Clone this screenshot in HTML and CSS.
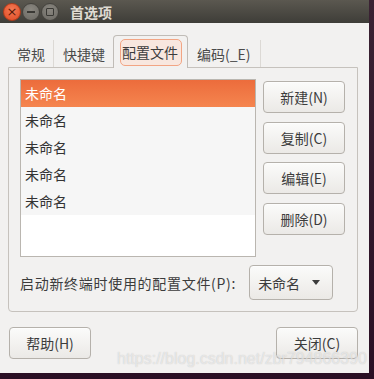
FILE: index.html
```html
<!DOCTYPE html>
<html lang="zh-CN">
<head>
    <meta charset="UTF-8">
    <title>首选项</title>
    <link rel="stylesheet" href="styles.css">
</head>
<body>
    <div class="window">
        <!-- Title bar -->
        <div class="titlebar">
            <span class="wbtn wbtn-close">&times;</span>
            <span class="wbtn wbtn-min"><i class="bar"></i></span>
            <span class="wbtn wbtn-max"><i class="box"></i></span>
            <span class="title">首选项</span>
        </div>

        <div class="content">
            <div class="tabs">
                <div class="tab">常规</div>
                <div class="tab">快捷键</div>
                <div class="tab active"><span class="focus">配置文件</span></div>
                <div class="tab">编码(_E)</div>
            </div>

            <div class="page">
                <div class="profiles">
                    <div class="list">
                        <div class="row selected">未命名</div>
                        <div class="row">未命名</div>
                        <div class="row">未命名</div>
                        <div class="row">未命名</div>
                        <div class="row">未命名</div>
                    </div>
                    <div class="actions">
                        <button class="btn">新建(N)</button>
                        <button class="btn">复制(C)</button>
                        <button class="btn">编辑(E)</button>
                        <button class="btn">删除(D)</button>
                    </div>
                </div>
                <div class="default-row">
                    <span class="label">启动新终端时使用的配置文件(P):</span>
                    <button class="btn combo">未命名 <i class="arrow"></i></button>
                </div>
            </div>

            <div class="footer">
                <button class="btn">帮助(H)</button>
                <button class="btn">关闭(C)</button>
            </div>
        </div>

        <div class="watermark">https://blog.csdn.net/zbr794866390</div>
    </div>
</body>
</html>
```

FILE: styles.css
```css
body {
    margin: 0;
    width: 374px;
    height: 379px;
    background: linear-gradient(#3a2233, #2a0f24);
    font-family: "Noto Sans CJK SC", "Noto Sans", sans-serif;
    font-size: 14px;
    color: #3c3c3c;
    overflow: hidden;
}
.window {
    position: relative;
    width: 369px;
    height: 373px;
    background: #f2f1f0;
    display: flex;
    flex-direction: column;
}

/* Title bar */
.titlebar {
    height: 23px;
    background: linear-gradient(#5b5850, #3e3d38);
    display: flex;
    align-items: center;
    padding-left: 3px;
    gap: 1px;
}
.wbtn {
    width: 18px;
    height: 18px;
    border-radius: 50%;
    box-sizing: border-box;
    display: flex;
    align-items: center;
    justify-content: center;
}
.wbtn-close {
    background: radial-gradient(circle at 50% 35%, #f47a55, #df4a23);
    border: 1px solid #b03c1c;
    color: #5a1a08;
    font-size: 13px;
    line-height: 1;
    font-family: "DejaVu Sans", sans-serif;
}
.wbtn-min, .wbtn-max {
    background: radial-gradient(circle at 50% 35%, #8a8780, #6a6862);
    border: 1px solid #45433e;
}
.bar {
    width: 8px;
    height: 2px;
    background: #3a3935;
}
.box {
    width: 6px;
    height: 6px;
    border: 1.5px solid #3a3935;
    border-radius: 1px;
}
.title {
    margin-left: 10px;
    color: #dfdbd2;
    font-weight: bold;
    font-size: 14px;
}

/* Dialog body */
.content {
    flex: 1;
    padding: 12px 11px 0 8px;
    display: flex;
    flex-direction: column;
}
.tabs {
    display: flex;
    align-items: flex-end;
    height: 33px;
    margin-bottom: -1px;
}
.tab {
    height: 28px;
    padding: 0 9px;
    display: flex;
    align-items: center;
    line-height: 20px;
    color: #4a4a4a;
    border-right: 1px solid #dcd9d5;
}
.tab:first-child {
    padding-right: 8px;
}
.tab:nth-child(2) {
    border-right: none;
    padding-right: 8px;
}
.tab.active {
    position: relative;
    height: 32px;
    padding: 0 5px 0 6px;
    border: 1px solid #c0bcb7;
    border-bottom: none;
    border-radius: 4px 4px 0 0;
    background: #f2f1f0;
    color: #3c3c3c;
}
.focus {
    padding: 2px 3px 3px 1px;
    border: 1px solid #f2a584;
    border-radius: 5px;
    background: #f8e7df;
}
.page {
    border: 1px solid #c6c2bd;
    border-radius: 0 0 4px 4px;
    padding: 11px 12px 11px 11px;
}
.profiles {
    display: flex;
    gap: 7px;
}
.list {
    width: 236px;
    height: 178px;
    box-sizing: border-box;
    border: 1px solid #bab6b0;
    background: #fff;
}
.row {
    height: 27px;
    line-height: 27px;
    padding-left: 4px;
    background: #f6f6f6;
    color: #333;
}
.row.selected {
    background: linear-gradient(#ec6c3c, #f5854f);
    color: #fff;
}
.actions {
    display: flex;
    flex-direction: column;
    gap: 8.5px;
    padding-top: 2px;
}
.btn {
    width: 82px;
    height: 32px;
    box-sizing: border-box;
    border: 1px solid #b5b1ab;
    border-radius: 4px;
    background: linear-gradient(#fbfbfa, #ebe9e6);
    box-shadow: 0 1px 0 rgba(255,255,255,0.6) inset;
    font-family: inherit;
    font-size: 14px;
    color: #3c3c3c;
    padding: 0;
}
.default-row {
    display: flex;
    align-items: center;
    gap: 13px;
    margin-top: 8px;
}
.label {
    color: #3c3c3c;
    letter-spacing: 0.7px;
}
.combo {
    width: 84px;
    height: 35px;
    display: flex;
    align-items: center;
    justify-content: space-between;
    padding: 0 12px 0 8px;
}
.arrow {
    width: 0;
    height: 0;
    border-left: 4.5px solid transparent;
    border-right: 4.5px solid transparent;
    border-top: 5px solid #3c3c3c;
}
.footer {
    display: flex;
    justify-content: space-between;
    margin-top: 15px;
    padding-left: 1px;
}
.watermark {
    position: absolute;
    left: 117px;
    top: 350px;
    font-family: "Liberation Sans", Arial, sans-serif;
    font-size: 16px;
    color: rgba(255,255,255,0.55);
    text-shadow: 0 0 1px rgba(120,120,120,0.4);
}
```
